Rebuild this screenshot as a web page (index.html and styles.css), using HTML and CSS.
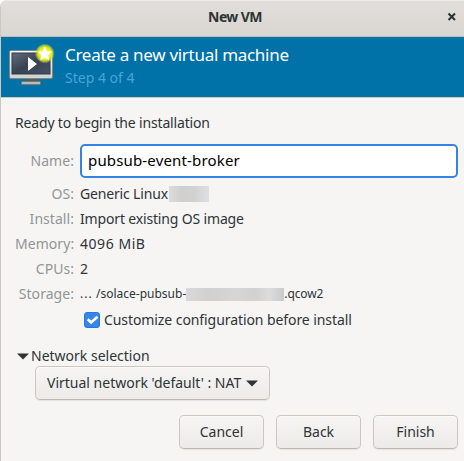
FILE: index.html
```html
<!DOCTYPE html>
<html lang="en">
<head>
<meta charset="utf-8">
<title>New VM</title>
<link rel="stylesheet" href="styles.css">
</head>
<body>
<div class="window">
  <header class="titlebar">
    <h1>New VM</h1>
    <svg class="close" width="10" height="10" viewBox="0 0 10 10"><path d="M1.500 1.500l6.500 6.500M8 1.500l-6.500 6.500" stroke="#2e3436" stroke-width="2.100"/></svg>
  </header>
  <section class="banner">
    <svg class="vm-icon" width="48" height="48" viewBox="0 0 48 48">
      <defs>
        <linearGradient id="screen" x1="0" y1="0" x2="1" y2="1"><stop offset="0" stop-color="#606c7c"/><stop offset=".5" stop-color="#394252"/><stop offset="1" stop-color="#465267"/></linearGradient>
        <linearGradient id="frame" x1="0" y1="0" x2="0" y2="1"><stop offset="0" stop-color="#fafafa"/><stop offset="1" stop-color="#d0d0ce"/></linearGradient>
        <radialGradient id="glow"><stop offset="0" stop-color="#fff85a"/><stop offset=".62" stop-color="#e8ee10"/><stop offset=".8" stop-color="#cfe02a" stop-opacity=".75"/><stop offset="1" stop-color="#b0d040" stop-opacity="0"/></radialGradient>
      </defs>
      <path d="M18 34h12l1 4H17z" fill="#555957"/>
      <rect x="13.500" y="37.500" width="19" height="3" rx="1" fill="#b9bab7" stroke="#777a77"/>
      <rect x="1.500" y="6.500" width="43" height="28" rx="1.500" fill="url(#frame)" stroke="#858784"/>
      <rect x="4" y="9" width="38" height="21" fill="url(#screen)" stroke="#303744"/>
      <path d="M20 13v14l9-7z" fill="#fff"/>
      <circle cx="36.800" cy="9.500" r="10" fill="url(#glow)"/>
      <path d="M36.800 2.500l2.100 4.600 5 .6-3.700 3.500 1 5-4.400-2.500-4.500 2.500 1-5-3.700-3.500 5-.6z" fill="#fff"/>
    </svg>
    <div>
      <h2><span class="t-head">Create a new virtual machine</span></h2>
      <p><span class="t-step">Step 4 of 4</span></p>
    </div>
  </section>
  <main>
    <p class="ready"><span class="t-ready">Ready to begin the installation</span></p>
    <div class="form">
      <label class="name-row">Name:</label><div class="entry"><span class="t-entry">pubsub-event-broker</span></div>
      <span class="label">OS:</span><div class="value"><span class="t-os">Generic Linux</span><i class="redacted os-mask"></i></div>
      <span class="label">Install:</span><div class="value"><span class="t-install">Import existing OS image</span></div>
      <span class="label">Memory:</span><div class="value"><span class="t-mem">4096 MiB</span></div>
      <span class="label">CPUs:</span><div class="value">2</div>
      <span class="label">Storage:</span><div class="value path"><span class="t-dots">...</span><span class="t-path">/solace-pubsub-</span><i class="redacted path-mask"></i><span class="t-ext">.qcow2</span></div>
    </div>
    <div class="customize">
      <svg width="16" height="16" viewBox="0 0 16 16"><rect x=".5" y=".5" width="15" height="15" rx="2.500" fill="#3787e8" stroke="#2379df"/><path d="M3.700 7.200l3.400 3.300L13.500 4.800" fill="none" stroke="#fff" stroke-width="2.600"/></svg>
      <span class="t-custom">Customize configuration before install</span>
    </div>
    <div class="expander">
      <svg width="12" height="7" viewBox="0 0 12 7"><path d="M0 .5h12L6 6.500z" fill="#2e3436"/></svg>
      <span class="t-net">Network selection</span>
    </div>
    <div class="btn combo"><span class="t-combo">Virtual network 'default' : NAT</span>
      <svg width="12" height="7" viewBox="0 0 12 7"><path d="M0 .5h12L6 6.500z" fill="#2e3436"/></svg>
    </div>
  </main>
  <footer>
    <div class="btn"><span class="t-cancel">Cancel</span></div>
    <div class="btn"><span class="t-back">Back</span></div>
    <div class="btn"><span class="t-finish">Finish</span></div>
  </footer>
</div>
</body>
</html>
```
FILE: styles.css
```css
* { box-sizing: border-box; }
body { margin: 0; background: #fff; font: 14px/20px "Noto Sans", sans-serif; color: #2e3436; overflow: hidden; }
h1, h2, p { margin: 0; font-weight: 400; }
span { white-space: nowrap; }
svg { display: block; flex: none; }
.window { width: 464px; height: 461px; background: #f6f5f4; border-left: 1px solid #cdc7c2; border-radius: 7px 0 0 0; overflow: hidden; }
.titlebar { height: 37px; display: grid; grid-template-columns: 1fr auto 1fr; align-items: center; background: linear-gradient(#e1dedb, #dad6d2); border-bottom: 1px solid #c2bcb6; box-shadow: inset 0 1px #eceae8; padding-bottom: 3px; }
.titlebar h1 { grid-column: 2; font-size: 14px; font-weight: 700; letter-spacing: -.6px; margin-left: 5px; }
.close { justify-self: end; margin-right: 7px; }
.banner { height: 61px; display: flex; padding: 7px 0 0 7px; gap: 9px; background: #0072a8; border-bottom: 1px solid #cdc7c2; }
.banner h2 { font-size: 17px; line-height: 22px; color: #fff; letter-spacing: -.29px; padding-bottom: 2px; }
.banner p { color: #4ba3d9; line-height: 20px; }
main { padding: 15px 6px 0 14px; }
.ready { height: 20px; letter-spacing: -.17px; }
.form { display: grid; grid-template-columns: 59px 1fr; column-gap: 6px; grid-template-rows: 34px 26px 25px 25px 25px 25px; margin-top: 11px; }
.label, .name-row { text-align: right; color: #929595; letter-spacing: .05px; }
.name-row { line-height: 34px; }
.label, .value { align-self: end; height: 20px; }
.value { display: flex; align-items: center; }
.entry { height: 34px; border: 2px solid #3584e4; border-radius: 5px; background: #fff; color: #000; padding-left: 6px; line-height: 28px; font-size: 15px; letter-spacing: .16px; }
.redacted { display: block; flex: none; background: linear-gradient(90deg, #dcdcdc, #cfcfcf 30%, #d2d2d2 65%, #dfe0e2); }
.os-mask { width: 40px; height: 16px; margin-left: 1px; }
.path { font-size: 12px; }
.path-mask { width: 98px; height: 13px; background: linear-gradient(90deg, #d9d9d9, #d0d0d0 25%, #d6d6d6 50%, #d1d1d1 70%, #dcdcdc 85%, #c8cacd); }
.customize { display: flex; align-items: center; gap: 4px; height: 20px; margin: 6px 0 0 69px; }
.expander { display: flex; align-items: center; gap: 2px; height: 20px; margin: 16px 0 0 2px; }
.btn { display: flex; align-items: center; justify-content: center; height: 34px; border: 1px solid #cdc7c2; border-bottom-color: #bfb8b1; border-radius: 5px; background: linear-gradient(#f6f5f4, #edebe9); box-shadow: 0 1px 1px rgba(0, 0, 0, .07), inset 0 1px #fbfafa; }
.combo { width: 235px; margin: 0 0 0 20px; justify-content: space-between; padding: 0 11px; }
footer { display: flex; justify-content: flex-end; gap: 12px; padding: 15px 6px 0 0; }
footer .btn { width: 85px; }
.t-dots { width: 16px; letter-spacing: 1px; }
.t-os, .t-install { letter-spacing: -.16px; }
.t-mem { letter-spacing: .55px; }
.t-custom { letter-spacing: -.08px; }
.t-ext { letter-spacing: -.1px; }
```
